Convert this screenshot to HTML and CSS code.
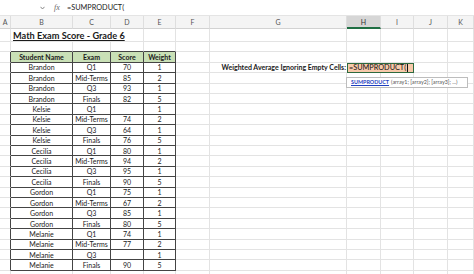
FILE: index.html
```html
<!DOCTYPE html>
<html>
<head>
<meta charset="utf-8">
<link rel="stylesheet" href="styles.css">
</head>
<body>
<div class="fbar">
  <span class="namebox"><svg class="chev" width="5" height="4" viewBox="0 0 5 4"><path d="M0.5 0.8 L2.5 3 L4.5 0.8" fill="none" stroke="#7a7a7a" stroke-width="0.9"/></svg></span>
  <span class="fx">fx</span>
  <span class="formula">=SUMPRODUCT(</span>
</div>
<div class="sheet">
  <div class="ch">A</div><div class="ch">B</div><div class="ch">C</div><div class="ch">D</div><div class="ch">E</div><div class="ch">F</div><div class="ch">G</div><div class="ch sel">H</div><div class="ch">I</div><div class="ch">J</div><div class="ch">K</div>

  <div class="c"></div><div class="c title"><span>Math Exam Score - Grade 6</span></div><div class="c"></div><div class="c"></div><div class="c"></div><div class="c"></div><div class="c"></div><div class="c"></div><div class="c"></div>

  <div class="c"></div><div class="c tt"></div><div class="c tt"></div><div class="c tt"></div><div class="c tt"></div><div class="c"></div><div class="c"></div><div class="c"></div><div class="c"></div><div class="c"></div><div class="c"></div>

  <div class="c tl"></div><div class="c th">Student Name</div><div class="c th">Exam</div><div class="c th">Score</div><div class="c th">Weight</div><div class="c"></div><div class="c"></div><div class="c"></div><div class="c"></div><div class="c"></div><div class="c"></div>

  <div class="c tl"></div><div class="c t">Brandon</div><div class="c t">Q1</div><div class="c t">70</div><div class="c t">1</div><div class="c"></div><div class="c label">Weighted Average Ignoring Empty Cells:</div><div class="c edit"><span class="etext">=SUMPRODUCT(</span><span class="caret"></span><div class="tip"><span class="fn">SUMPRODUCT</span> (array1; [array2]; [array3]; ...)</div></div><div class="c"></div><div class="c"></div>

  <div class="c tl"></div><div class="c t">Brandon</div><div class="c t">Mid-Terms</div><div class="c t">85</div><div class="c t">2</div><div class="c"></div><div class="c"></div><div class="c"></div><div class="c"></div><div class="c"></div><div class="c"></div>
  <div class="c tl"></div><div class="c t">Brandon</div><div class="c t">Q3</div><div class="c t">93</div><div class="c t">1</div><div class="c"></div><div class="c"></div><div class="c"></div><div class="c"></div><div class="c"></div><div class="c"></div>
  <div class="c tl"></div><div class="c t">Brandon</div><div class="c t">Finals</div><div class="c t">82</div><div class="c t">5</div><div class="c"></div><div class="c"></div><div class="c"></div><div class="c"></div><div class="c"></div><div class="c"></div>
  <div class="c tl"></div><div class="c t">Kelsie</div><div class="c t">Q1</div><div class="c t"></div><div class="c t">1</div><div class="c"></div><div class="c"></div><div class="c"></div><div class="c"></div><div class="c"></div><div class="c"></div>
  <div class="c tl"></div><div class="c t">Kelsie</div><div class="c t">Mid-Terms</div><div class="c t">74</div><div class="c t">2</div><div class="c"></div><div class="c"></div><div class="c"></div><div class="c"></div><div class="c"></div><div class="c"></div>
  <div class="c tl"></div><div class="c t">Kelsie</div><div class="c t">Q3</div><div class="c t">64</div><div class="c t">1</div><div class="c"></div><div class="c"></div><div class="c"></div><div class="c"></div><div class="c"></div><div class="c"></div>
  <div class="c tl"></div><div class="c t">Kelsie</div><div class="c t">Finals</div><div class="c t">76</div><div class="c t">5</div><div class="c"></div><div class="c"></div><div class="c"></div><div class="c"></div><div class="c"></div><div class="c"></div>
  <div class="c tl"></div><div class="c t">Cecilia</div><div class="c t">Q1</div><div class="c t">80</div><div class="c t">1</div><div class="c"></div><div class="c"></div><div class="c"></div><div class="c"></div><div class="c"></div><div class="c"></div>
  <div class="c tl"></div><div class="c t">Cecilia</div><div class="c t">Mid-Terms</div><div class="c t">94</div><div class="c t">2</div><div class="c"></div><div class="c"></div><div class="c"></div><div class="c"></div><div class="c"></div><div class="c"></div>
  <div class="c tl"></div><div class="c t">Cecilia</div><div class="c t">Q3</div><div class="c t">95</div><div class="c t">1</div><div class="c"></div><div class="c"></div><div class="c"></div><div class="c"></div><div class="c"></div><div class="c"></div>
  <div class="c tl"></div><div class="c t">Cecilia</div><div class="c t">Finals</div><div class="c t">90</div><div class="c t">5</div><div class="c"></div><div class="c"></div><div class="c"></div><div class="c"></div><div class="c"></div><div class="c"></div>
  <div class="c tl"></div><div class="c t">Gordon</div><div class="c t">Q1</div><div class="c t">75</div><div class="c t">1</div><div class="c"></div><div class="c"></div><div class="c"></div><div class="c"></div><div class="c"></div><div class="c"></div>
  <div class="c tl"></div><div class="c t">Gordon</div><div class="c t">Mid-Terms</div><div class="c t">67</div><div class="c t">2</div><div class="c"></div><div class="c"></div><div class="c"></div><div class="c"></div><div class="c"></div><div class="c"></div>
  <div class="c tl"></div><div class="c t">Gordon</div><div class="c t">Q3</div><div class="c t">85</div><div class="c t">1</div><div class="c"></div><div class="c"></div><div class="c"></div><div class="c"></div><div class="c"></div><div class="c"></div>
  <div class="c tl"></div><div class="c t">Gordon</div><div class="c t">Finals</div><div class="c t">80</div><div class="c t">5</div><div class="c"></div><div class="c"></div><div class="c"></div><div class="c"></div><div class="c"></div><div class="c"></div>
  <div class="c tl"></div><div class="c t">Melanie</div><div class="c t">Q1</div><div class="c t">74</div><div class="c t">1</div><div class="c"></div><div class="c"></div><div class="c"></div><div class="c"></div><div class="c"></div><div class="c"></div>
  <div class="c tl"></div><div class="c t">Melanie</div><div class="c t">Mid-Terms</div><div class="c t">77</div><div class="c t">2</div><div class="c"></div><div class="c"></div><div class="c"></div><div class="c"></div><div class="c"></div><div class="c"></div>
  <div class="c tl"></div><div class="c t">Melanie</div><div class="c t">Q3</div><div class="c t"></div><div class="c t">1</div><div class="c"></div><div class="c"></div><div class="c"></div><div class="c"></div><div class="c"></div><div class="c"></div>
  <div class="c tl"></div><div class="c t">Melanie</div><div class="c t">Finals</div><div class="c t">90</div><div class="c t">5</div><div class="c"></div><div class="c"></div><div class="c"></div><div class="c"></div><div class="c"></div><div class="c"></div>
  <div class="c"></div><div class="c"></div><div class="c"></div><div class="c"></div><div class="c"></div><div class="c"></div><div class="c"></div><div class="c"></div><div class="c"></div><div class="c"></div><div class="c"></div>
</div>
</body>
</html>
```
FILE: styles.css
```css
html, body {
  margin: 0;
  padding: 0;
  background: #ffffff;
  overflow: hidden;
}
body {
  width: 474px;
  height: 274px;
  font-family: Lato, "Liberation Sans", sans-serif;
  color: #1b1b1b;
}
.fbar {
  height: 16px;
  display: flex;
  align-items: center;
  background: #ffffff;
  border-bottom: 1px solid #e4e4e4;
  box-sizing: border-box;
}
.namebox {
  width: 45px;
  height: 16px;
  display: flex;
  justify-content: flex-end;
  align-items: center;
}
.chev {
  display: block;
}
.fx {
  font-family: "Liberation Serif", serif;
  font-style: italic;
  font-size: 8px;
  color: #666;
  margin-left: 9px;
  width: 11px;
}
.formula {
  font-size: 7.3px;
  color: #222;
  margin-left: 2px;
}
.sheet {
  display: grid;
  grid-template-columns: 11px 62px 38px 33px 32px 34px 137px 34px 33px 34px 26px;
  grid-template-rows: 13px 12.8px 10.5px;
  grid-auto-rows: 10.42px;
  width: 474px;
  overflow: hidden;
}
.ch {
  background: #f4f4f4;
  border-right: 1px solid #dedede;
  border-bottom: 1px solid #d2d2d2;
  box-sizing: border-box;
  font-size: 7px;
  color: #555;
  display: flex;
  align-items: center;
  justify-content: center;
}
.ch.sel {
  background: #d6d6d6;
  border-bottom: 2px solid #1f6e43;
  color: #333;
}
.c {
  border-right: 1px solid #e3e3e3;
  border-bottom: 1px solid #e3e3e3;
  box-sizing: border-box;
  font-size: 7px;
  display: flex;
  align-items: center;
  justify-content: center;
  white-space: nowrap;
  min-width: 0;
}
.title {
  grid-column: span 3;
  justify-content: flex-start;
  font-size: 9.2px;
  font-weight: bold;
  padding-left: 2px;
  padding-top: 1px;
}
.title span {
  text-decoration: underline;
  text-underline-offset: 1px;
}
.tt {
  border-bottom-color: #444;
}
.tl {
  border-right-color: #444;
}
.t, .th {
  border-right-color: #444;
  border-bottom-color: #444;
}
.th {
  background: #c9e0b6;
  font-weight: bold;
}
.label {
  justify-content: flex-end;
  font-weight: bold;
  padding-right: 1px;
  border-right: none;
}
.edit {
  grid-column: span 2;
  background: #f7c9aa;
  border: 1px solid #2d6a3e;
  justify-content: flex-start;
  position: relative;
  padding-left: 1px;
}
.etext {
  font-size: 7.3px;
  color: #111;
}
.caret {
  width: 1px;
  height: 8px;
  background: #111;
  margin-left: 0.5px;
}
.tip {
  position: absolute;
  left: -2px;
  top: 13px;
  width: max-content;
  min-width: 122px;
  height: 11px;
  background: #fff;
  border: 1px solid #bdbdbd;
  box-sizing: border-box;
  font-size: 5.4px;
  color: #555;
  display: flex;
  align-items: center;
  padding: 0 3px 0 4px;
  white-space: nowrap;
  z-index: 2;
}
.fn {
  color: #1f3fbf;
  text-decoration: underline;
  font-weight: bold;
  margin-right: 2px;
}
```
